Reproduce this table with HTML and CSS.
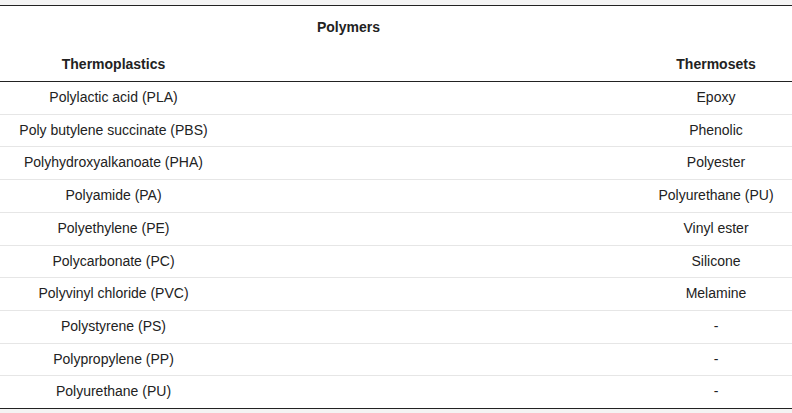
FILE: index.html
```html
<!DOCTYPE html>
<html>
<head>
<meta charset="utf-8">
<link rel="stylesheet" href="styles.css">
</head>
<body>
<div class="wrap">
<table class="tbl">
  <colgroup>
    <col class="c1"><col class="c2"><col class="c3"><col class="c4">
  </colgroup>
  <thead>
    <tr class="h1">
      <th></th><th>Polymers</th><th></th><th></th>
    </tr>
    <tr class="h2">
      <th>Thermoplastics</th><th></th><th></th><th>Thermosets</th>
    </tr>
  </thead>
  <tbody>
    <tr><td>Polylactic acid (PLA)</td><td></td><td></td><td>Epoxy</td></tr>
    <tr><td>Poly butylene succinate (PBS)</td><td></td><td></td><td>Phenolic</td></tr>
    <tr><td>Polyhydroxyalkanoate (PHA)</td><td></td><td></td><td>Polyester</td></tr>
    <tr><td>Polyamide (PA)</td><td></td><td></td><td>Polyurethane (PU)</td></tr>
    <tr><td>Polyethylene (PE)</td><td></td><td></td><td>Vinyl ester</td></tr>
    <tr><td>Polycarbonate (PC)</td><td></td><td></td><td>Silicone</td></tr>
    <tr><td>Polyvinyl chloride (PVC)</td><td></td><td></td><td>Melamine</td></tr>
    <tr><td>Polystyrene (PS)</td><td></td><td></td><td>-</td></tr>
    <tr><td>Polypropylene (PP)</td><td></td><td></td><td>-</td></tr>
    <tr><td>Polyurethane (PU)</td><td></td><td></td><td>-</td></tr>
  </tbody>
</table>
</div>
</body>
</html>
```
FILE: styles.css
```css
html, body {
  margin: 0;
  padding: 0;
  background: #f4f4f4;
}
.wrap {
  padding-top: 5px;
}
.tbl {
  width: 792px;
  border-collapse: collapse;
  table-layout: fixed;
  background: #fff;
  font-family: "Liberation Sans", Arial, sans-serif;
  font-size: 14px;
  color: #222;
  border-top: 1px solid #222;
  border-bottom: 1px solid #222;
}
.c1 { width: 227px; }
.c2 { width: 243px; }
.c3 { width: 170px; }
.c4 { width: 152px; }
.tbl th, .tbl td {
  text-align: center;
  padding: 0 4px;
  white-space: nowrap;
}
.tbl th {
  font-weight: bold;
  vertical-align: middle;
}
.h1 th {
  height: 41px;
}
.h2 th {
  height: 34px;
  border-bottom: 1px solid #222;
}
.tbl tbody td {
  padding-top: 7px;
  padding-bottom: 7px;
  line-height: 17.7px;
  border-top: 1px solid #e6e6e6;
}
.tbl tbody tr:first-child td {
  border-top: none;
}
```
